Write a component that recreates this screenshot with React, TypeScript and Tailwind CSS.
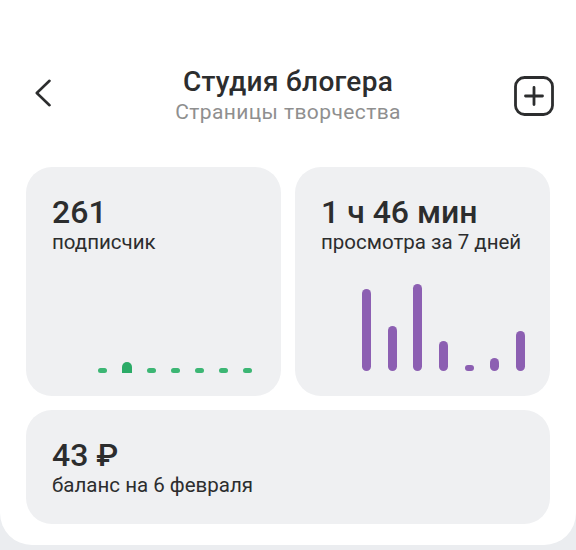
import React from "react";

const subsBars = [5, 11, 5, 5, 5, 5, 5];
const viewBars = [82, 45, 87, 30, 6, 13, 40];

function StatCard({
  value,
  label,
  children,
  className = "",
}: {
  value: string;
  label: string;
  children?: React.ReactNode;
  className?: string;
}) {
  return (
    <div className={`flex flex-col rounded-[26px] bg-[#eff0f2] pl-[26px] pt-[27px] ${className}`}>
      <div className="text-[32px] font-medium leading-[36px] text-[#2c2d2e]">{value}</div>
      <div className="text-[20.5px] leading-[24px] text-[#2c2d2e]">{label}</div>
      {children}
    </div>
  );
}

export default function App() {
  return (
    <div className="h-[550px] w-[576px] overflow-hidden bg-[#ebedf0] font-[Roboto,sans-serif]">
      <div className="h-[545px] rounded-b-[32px] bg-white pt-[66px]">
        <header className="flex items-start justify-between px-[22px]">
          <div className="w-[44px] pl-[12px] pt-[13px]">
            <svg width="18" height="28" viewBox="0 0 18 28" fill="none" aria-hidden>
              <polyline
                points="15.5,1.8 2.8,14 15.5,26.2"
                stroke="#2c2d2e"
                strokeWidth="2.6"
                strokeLinecap="round"
                strokeLinejoin="round"
              />
            </svg>
          </div>
          <div className="flex flex-col items-center">
            <h1 className="text-[28px] font-medium leading-[32px] tracking-[0.3px] text-[#2c2d2e]">Студия блогера</h1>
            <p className="text-[21px] leading-[28px] tracking-[0.4px] text-[#8f8f8f]">Страницы творчества</p>
          </div>
          <div className="flex w-[44px] justify-end pt-[10px]">
            <svg width="40" height="40" viewBox="0 0 40 40" fill="none" aria-hidden>
              <rect x="1.5" y="1.5" width="37" height="37" rx="9" stroke="#2c2d2e" strokeWidth="2.8" />
              <path d="M20 11.5V28.5M11.5 20H28.5" stroke="#2c2d2e" strokeWidth="2.8" strokeLinecap="round" />
            </svg>
          </div>
        </header>

        <div className="mt-[41px] flex flex-col gap-[14px] px-[26px]">
          <div className="grid grid-cols-2 gap-[14px]">
            <StatCard value="261" label="подписчик" className="h-[229px] pb-[23px] pr-[29px]">
              <div className="mt-auto flex items-end gap-[15px] self-end">
                {subsBars.map((h, i) => (
                  <div
                    key={i}
                    className={h > 5 ? "w-[10px] rounded-t-full rounded-b-[2px] bg-[#2bab67]" : "w-[9px] rounded-full bg-[#3cb674]"}
                    style={{ height: h }}
                  />
                ))}
              </div>
            </StatCard>
            <StatCard value="1 ч 46 мин" label="просмотра за 7 дней" className="h-[229px] pb-[25px] pr-[25px]">
              <div className="mt-auto flex items-end gap-[16.7px] self-end">
                {viewBars.map((h, i) => (
                  <div key={i} className="w-[9px] rounded-full bg-[#8c5fb2]" style={{ height: h }} />
                ))}
              </div>
            </StatCard>
          </div>
          <StatCard value="43 ₽" label="баланс на 6 февраля" className="h-[114px] pt-[26px]" />
        </div>
      </div>
    </div>
  );
}
